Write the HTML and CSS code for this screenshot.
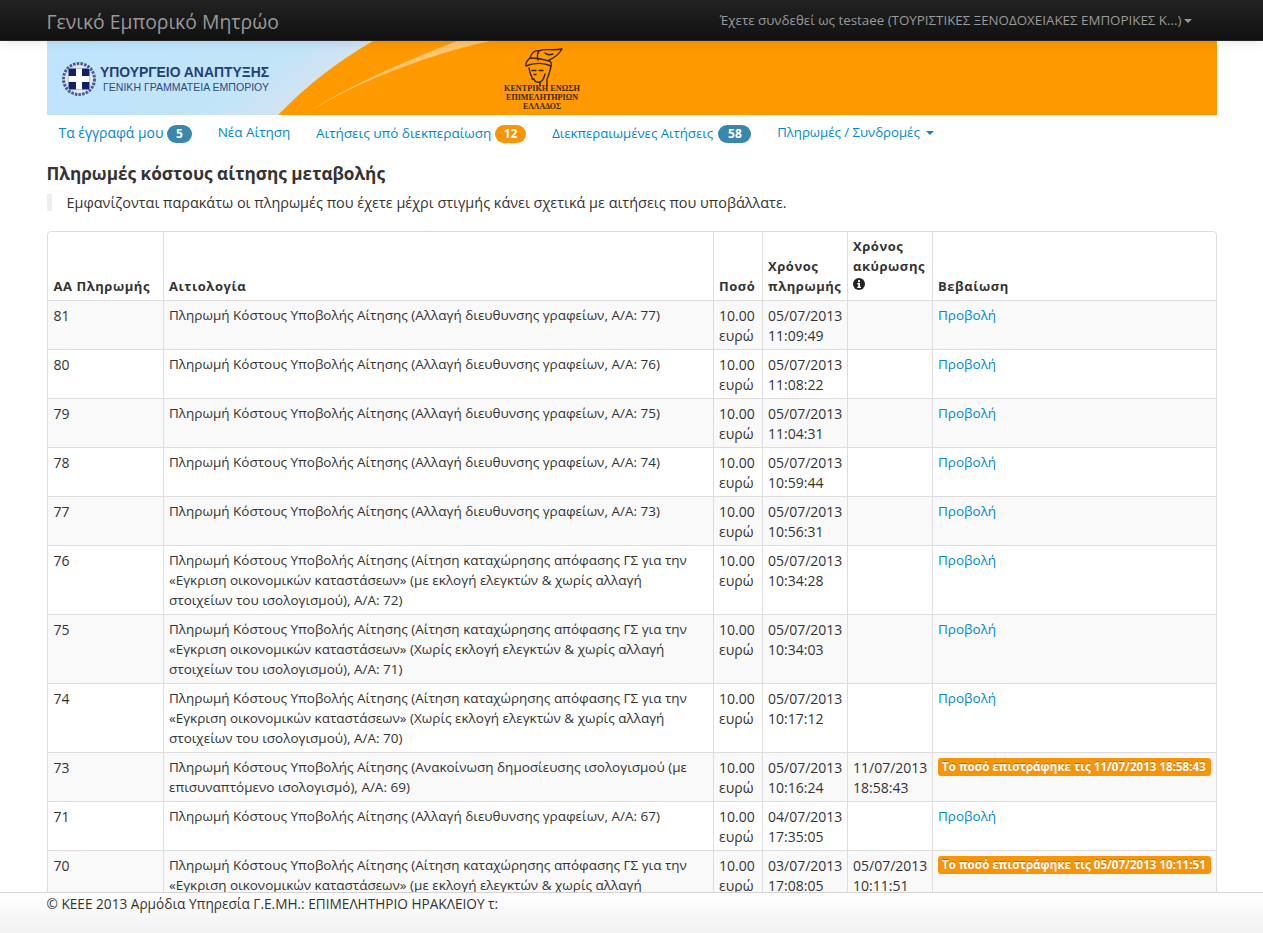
FILE: index.html
```html
<!DOCTYPE html>
<html lang="el">
<head>
<meta charset="utf-8">
<title>Γενικό Εμπορικό Μητρώο</title>
<link rel="stylesheet" href="styles.css">
</head>
<body>
<header class="navbar">
  <div class="container navbar-inner">
    <a class="brand">Γενικό Εμπορικό Μητρώο</a>
    <a class="user">Έχετε συνδεθεί ως testaee (ΤΟΥΡΙΣΤΙΚΕΣ ΞΕΝΟΔΟΧΕΙΑΚΕΣ ΕΜΠΟΡΙΚΕΣ Κ...)<span class="caret caret-grey"></span></a>
  </div>
</header>
<main class="page">
<div class="container">
  <svg class="banner" viewBox="0 0 1170 74" width="1170" height="74" role="img">
    <defs>
      <linearGradient id="sky" x1="0" y1="0" x2="1" y2="0.3">
        <stop offset="0" stop-color="#bde5fc"/>
        <stop offset="0.7" stop-color="#c3e4f9"/>
        <stop offset="1" stop-color="#dbe3ec"/>
      </linearGradient>
    </defs>
    <rect width="340" height="74" fill="url(#sky)"/>
    <path d="M231 74C262 42 292 20 326 0H1170V74Z" fill="#ff9900"/>
    <path d="M256 74C300 46 352 22 410 0H443C380 14 312 40 256 74Z" fill="#ffc56e"/>
    <circle cx="32" cy="38" r="15.500" fill="#dfe6f3" stroke="#4a5a90" stroke-width="3" stroke-dasharray="2.500 1.200"/>
    <rect x="21.500" y="27.500" width="21" height="21" rx="2" fill="#10206e"/>
    <path d="M29 27.500h6v7.500h7.500v6h-7.500v7.500h-6v-7.500h-7.500v-6h7.500z" fill="#fff"/>
    <text x="53" y="35.500" class="b-title" textLength="169" lengthAdjust="spacingAndGlyphs">ΥΠΟΥΡΓΕΙΟ ΑΝΑΠΤΥΞΗΣ</text>
    <text x="56" y="49.500" class="b-sub" textLength="166" lengthAdjust="spacingAndGlyphs">ΓΕΝΙΚΗ ΓΡΑΜΜΑΤΕΙΑ ΕΜΠΟΡΙΟΥ</text>
    <g fill="none" stroke="#3a2408" stroke-width="1.400" stroke-linejoin="round" stroke-linecap="round">
      <path d="M479 25C478 21 481 19 483 17C484 12 488 9 492 10C497 7 505 10 515 8C512 13 507 17 502 19C504 21 505 23 504 25C496 21 486 22 479 25Z"/>
      <path d="M492 10C490 13 490 16 491 19M483 17C488 17 495 18 502 20M498 12C500 14 503 14 506 13"/>
      <path d="M482 27C483 31 483 34 485 36L485 38L487 38C487 40 490 42 493 41C496 40 497 37 498 33"/>
      <path d="M504 25C503 30 501 36 500 38L500 44M493 41L493 45"/>
      <path d="M485 29.500H489M492 29.500H496M487 33.500H489"/>
    </g>
    <text x="495" y="50" class="b-serif" textLength="76" lengthAdjust="spacingAndGlyphs">ΚΕΝΤΡΙΚΗ ΕΝΩΣΗ</text>
    <text x="495" y="59" class="b-serif" textLength="72" lengthAdjust="spacingAndGlyphs">ΕΠΙΜΕΛΗΤΗΡΙΩΝ</text>
    <text x="495" y="68" class="b-serif" textLength="38" lengthAdjust="spacingAndGlyphs">ΕΛΛΑΔΟΣ</text>
  </svg>

  <nav class="menu">
    <a class="wide">Τα έγγραφά μου <span class="badge badge-info">5</span></a>
    <a class="plain">Νέα Αίτηση</a>
    <a>Αιτήσεις υπό διεκπεραίωση <span class="badge badge-warning">12</span></a>
    <a class="tight">Διεκπεραιωμένες Αιτήσεις <span class="badge badge-info">58</span></a>
    <a class="plain tight">Πληρωμές / Συνδρομές <span class="caret caret-blue"></span></a>
  </nav>

  <h4 class="title">Πληρωμές κόστους αίτησης μεταβολής</h4>
  <blockquote class="quote">Εμφανίζονται παρακάτω οι πληρωμές που έχετε μέχρι στιγμής κάνει σχετικά με αιτήσεις που υποβάλλατε.</blockquote>

  <div class="table-wrap">
    <table class="table">
      <colgroup>
        <col class="c1"><col class="c2"><col class="c3"><col class="c4"><col class="c5"><col class="c6">
      </colgroup>
      <thead>
        <tr>
          <th>ΑΑ Πληρωμής</th>
          <th>Αιτιολογία</th>
          <th>Ποσό</th>
          <th>Χρόνος πληρωμής</th>
          <th>Χρόνος ακύρωσης <svg class="info" viewBox="0 0 12 12" width="12" height="12"><circle cx="6" cy="6" r="6" fill="#222"/><rect x="5" y="2.200" width="2" height="2" fill="#fff"/><path d="M4.200 5H7V8.800H8V10H4.200V8.800H5.200V6.200H4.200Z" fill="#fff"/></svg></th>
          <th>Βεβαίωση</th>
        </tr>
      </thead>
      <tbody>
        <tr><td>81</td><td class="desc">Πληρωμή Κόστους Υποβολής Αίτησης (Αλλαγή διευθυνσης γραφείων, Α/Α: 77)</td><td>10.00 ευρώ</td><td>05/07/2013 11:09:49</td><td></td><td class="desc"><a>Προβολή</a></td></tr>
        <tr><td>80</td><td class="desc">Πληρωμή Κόστους Υποβολής Αίτησης (Αλλαγή διευθυνσης γραφείων, Α/Α: 76)</td><td>10.00 ευρώ</td><td>05/07/2013 11:08:22</td><td></td><td class="desc"><a>Προβολή</a></td></tr>
        <tr><td>79</td><td class="desc">Πληρωμή Κόστους Υποβολής Αίτησης (Αλλαγή διευθυνσης γραφείων, Α/Α: 75)</td><td>10.00 ευρώ</td><td>05/07/2013 11:04:31</td><td></td><td class="desc"><a>Προβολή</a></td></tr>
        <tr><td>78</td><td class="desc">Πληρωμή Κόστους Υποβολής Αίτησης (Αλλαγή διευθυνσης γραφείων, Α/Α: 74)</td><td>10.00 ευρώ</td><td>05/07/2013 10:59:44</td><td></td><td class="desc"><a>Προβολή</a></td></tr>
        <tr><td>77</td><td class="desc">Πληρωμή Κόστους Υποβολής Αίτησης (Αλλαγή διευθυνσης γραφείων, Α/Α: 73)</td><td>10.00 ευρώ</td><td>05/07/2013 10:56:31</td><td></td><td class="desc"><a>Προβολή</a></td></tr>
        <tr><td>76</td><td class="desc">Πληρωμή Κόστους Υποβολής Αίτησης (Αίτηση καταχώρησης απόφασης ΓΣ για την «Εγκριση οικονομικών καταστάσεων» (με εκλογή ελεγκτών &amp; χωρίς αλλαγή στοιχείων του ισολογισμού), Α/Α: 72)</td><td>10.00 ευρώ</td><td>05/07/2013 10:34:28</td><td></td><td class="desc"><a>Προβολή</a></td></tr>
        <tr><td>75</td><td class="desc">Πληρωμή Κόστους Υποβολής Αίτησης (Αίτηση καταχώρησης απόφασης ΓΣ για την «Εγκριση οικονομικών καταστάσεων» (Χωρίς εκλογή ελεγκτών &amp; χωρίς αλλαγή στοιχείων του ισολογισμού), Α/Α: 71)</td><td>10.00 ευρώ</td><td>05/07/2013 10:34:03</td><td></td><td class="desc"><a>Προβολή</a></td></tr>
        <tr><td>74</td><td class="desc">Πληρωμή Κόστους Υποβολής Αίτησης (Αίτηση καταχώρησης απόφασης ΓΣ για την «Εγκριση οικονομικών καταστάσεων» (Χωρίς εκλογή ελεγκτών &amp; χωρίς αλλαγή στοιχείων του ισολογισμού), Α/Α: 70)</td><td>10.00 ευρώ</td><td>05/07/2013 10:17:12</td><td></td><td class="desc"><a>Προβολή</a></td></tr>
        <tr><td>73</td><td class="desc">Πληρωμή Κόστους Υποβολής Αίτησης (Ανακοίνωση δημοσίευσης ισολογισμού (με επισυναπτόμενο ισολογισμό), Α/Α: 69)</td><td>10.00 ευρώ</td><td>05/07/2013 10:16:24</td><td>11/07/2013 18:58:43</td><td><span class="label">Το ποσό επιστράφηκε τις 11/07/2013 18:58:43</span></td></tr>
        <tr><td>71</td><td class="desc">Πληρωμή Κόστους Υποβολής Αίτησης (Αλλαγή διευθυνσης γραφείων, Α/Α: 67)</td><td>10.00 ευρώ</td><td>04/07/2013 17:35:05</td><td></td><td class="desc"><a>Προβολή</a></td></tr>
        <tr><td>70</td><td class="desc">Πληρωμή Κόστους Υποβολής Αίτησης (Αίτηση καταχώρησης απόφασης ΓΣ για την «Εγκριση οικονομικών καταστάσεων» (με εκλογή ελεγκτών &amp; χωρίς αλλαγή</td><td>10.00 ευρώ</td><td>03/07/2013 17:08:05</td><td>05/07/2013 10:11:51</td><td><span class="label">Το ποσό επιστράφηκε τις 05/07/2013 10:11:51</span></td></tr>
      </tbody>
    </table>
  </div>
</div>
</main>
<footer class="footer">
  <div class="container">© ΚΕΕΕ 2013 Αρμόδια Υπηρεσία Γ.Ε.ΜΗ.: ΕΠΙΜΕΛΗΤΗΡΙΟ ΗΡΑΚΛΕΙΟΥ τ:</div>
</footer>
</body>
</html>
```
FILE: styles.css
```css
* { box-sizing: border-box; }
html, body { height: 100%; overflow: hidden; }
body {
  margin: 0;
  display: flex;
  flex-direction: column;
  font-family: "Open Sans", "Noto Sans", sans-serif;
  font-size: 14px;
  line-height: 20px;
  color: #333;
  background: #fff;
}
a { color: #0088cc; }
.container { width: 1170px; margin: 0 auto; }
.navbar {
  flex: none;
  height: 41px;
  background: linear-gradient(#222222, #111111);
  border-bottom: 1px solid #252525;
  box-shadow: 0 1px 10px rgba(0,0,0,.1);
  position: relative;
  z-index: 1;
}
.navbar-inner { display: flex; justify-content: space-between; height: 40px; }
.brand { color: #999; font-size: 19.400px; line-height: 44px; }
.user { color: #999; font-size: 13.350px; line-height: 40px; margin-right: 25px; }
.caret { display: inline-block; width: 0; height: 0; border-left: 4px solid transparent; border-right: 4px solid transparent; border-top: 4px solid; vertical-align: middle; }
.caret-grey { color: #999; margin-left: 2px; }
.caret-blue { color: #0088cc; margin-left: 3px; }
.page { flex: 1; min-height: 0; overflow: hidden; }
.banner { display: block; }
.menu { display: flex; gap: 25.700px; padding: 8px 0 0 12px; height: 36px; font-size: 13.500px; }
.menu .plain { margin-top: -1px; }
.menu .tight { font-size: 13.200px; }
.menu .tight .badge { margin-left: 2px; min-width: 33px; padding: 0; }
.menu .wide { font-size: 13.900px; }
.badge { display: inline-block; min-width: 25px; padding: 0 9px; border-radius: 9px; color: #fff; font-size: 12px; font-weight: 700; line-height: 18px; text-align: center; }
.badge-info { background: #3a87ad; }
.badge-warning { background: #f89406; }
.title { margin: 0; padding-top: 13px; font-size: 17.200px; font-weight: 700; line-height: 20px; color: #333; }
.quote { margin: 10px 0 20px; padding: 0 0 0 15px; border-left: 5px solid #eee; height: 17px; line-height: 17px; font-size: 14.450px; }
.table-wrap { border: 1px solid #ddd; border-radius: 4px; overflow: hidden; }
.table { width: 100%; border-collapse: collapse; table-layout: fixed; }
.c1 { width: 116px; }
.c2 { width: 550px; }
.c3 { width: 49px; }
.c4 { width: 85px; }
.c5 { width: 85px; }
th, td { text-align: left; border-left: 1px solid #ddd; border-top: 1px solid #ddd; line-height: 20px; }
th { padding: 4px 5px; }
td { padding: 5px 5px 3px; }
th:first-child, td:first-child { border-left: 0; padding-left: 6px; }
thead tr:first-child th { border-top: 0; }
th { vertical-align: bottom; font-size: 13px; font-weight: 700; letter-spacing: .55px; color: #333; }
td { vertical-align: top; }
td.desc { font-size: 13.500px; padding: 4px 5px; }
tbody tr:nth-child(odd) td { background: #f9f9f9; }
.info { vertical-align: 1px; }
.label { display: block; padding: 0 4px; background: #f89406; border-radius: 3px; color: #fff; font-size: 11.600px; font-weight: 700; line-height: 18px; white-space: nowrap; text-shadow: 0 -1px 0 rgba(0,0,0,.25); }
.footer {
  flex: none;
  height: 41px;
  background: linear-gradient(#ffffff, #f2f2f2);
  border-top: 1px solid #d4d4d4;
  font-size: 13.650px;
  padding-top: 1px;
  line-height: 20px;
}
.b-title { font-family: "Liberation Sans", sans-serif; font-weight: 700; font-size: 14px; fill: #233f78; }
.b-sub { font-family: "Liberation Sans", sans-serif; font-size: 11px; fill: #2c4a80; }
.b-serif { font-family: "Liberation Serif", serif; font-weight: 700; font-size: 9px; fill: #3a2408; text-anchor: middle; }
```
